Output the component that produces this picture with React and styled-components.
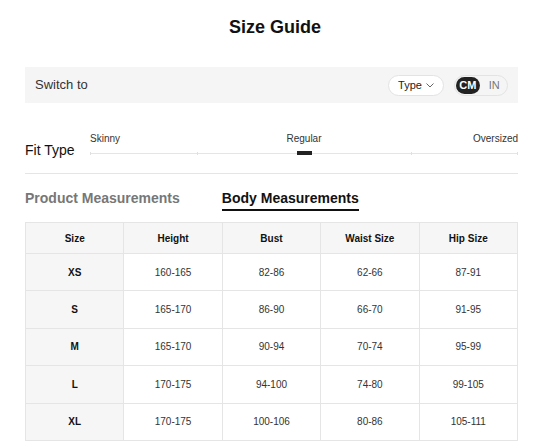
import React from 'react';
import styled, { createGlobalStyle } from 'styled-components';

const GlobalStyle = createGlobalStyle`
  body {
    margin: 0;
    background: #fff;
    font-family: "Liberation Sans", Arial, sans-serif;
    color: #222;
  }
`;

const Page = styled.div`
  width: 493px;
  padding: 17px 0 0 25px;
`;

const Title = styled.h1`
  margin: 0;
  font-size: 18px;
  line-height: 20px;
  font-weight: bold;
  text-align: center;
  color: #111;
  padding-left: 7px;
`;

const SwitchBar = styled.div`
  margin-top: 30px;
  height: 36px;
  background: #f5f5f5;
  display: flex;
  align-items: center;
  justify-content: space-between;
  padding: 0 10px;
`;

const SwitchLabel = styled.span`
  font-size: 13px;
  color: #333;
  margin-top: -2px;
`;

const Controls = styled.div`
  display: flex;
  align-items: center;
  gap: 10px;
`;

const TypeButton = styled.div`
  box-sizing: border-box;
  width: 56px;
  height: 21px;
  border: 1px solid #e3e3e3;
  border-radius: 11px;
  background: #fff;
  display: flex;
  align-items: center;
  justify-content: center;
  gap: 4px;
  font-size: 11px;
  color: #222;
`;

const UnitToggle = styled.div`
  box-sizing: border-box;
  width: 54px;
  height: 21px;
  border: 1px solid #e3e3e3;
  border-radius: 11px;
  padding: 1px;
  display: flex;
  align-items: center;
`;

const Unit = styled.span`
  width: 25px;
  height: 17px;
  border-radius: 9px;
  display: flex;
  align-items: center;
  justify-content: center;
  font-size: 11px;
  font-weight: ${p => (p.$active ? 'bold' : 'normal')};
  background: ${p => (p.$active ? '#222' : 'transparent')};
  color: ${p => (p.$active ? '#fff' : '#777')};
  margin-left: ${p => (p.$active ? '0' : '3px')};
`;

const FitRow = styled.div`
  display: flex;
  align-items: flex-end;
  padding: 30px 0 16px;
  border-bottom: 1px solid #e5e5e5;
`;

const FitLabel = styled.div`
  width: 65px;
  flex-shrink: 0;
  font-size: 14px;
  line-height: 16px;
  color: #111;
  margin-bottom: -1px;
`;

const Slider = styled.div`
  flex: 1;
`;

const SliderLabels = styled.div`
  display: grid;
  grid-template-columns: 1fr auto 1fr;
  font-size: 10px;
  line-height: 12px;
  color: #333;

  & > span:last-child {
    text-align: right;
  }
`;

const Track = styled.div`
  position: relative;
  height: 12px;
`;

const Line = styled.div`
  position: absolute;
  left: 0;
  right: 0;
  top: 8px;
  height: 1px;
  background: #e5e5e5;
`;

const Tick = styled.div`
  position: absolute;
  top: 7px;
  width: 1px;
  height: 3px;
  background: #e0e0e0;
`;

const Thumb = styled.div`
  position: absolute;
  top: 6px;
  left: 50%;
  width: 15px;
  height: 4px;
  margin-left: -7px;
  background: #222;
`;

const Tabs = styled.div`
  display: flex;
  gap: 42px;
  margin-top: 16px;
`;

const Tab = styled.div`
  font-size: 14px;
  line-height: 16px;
  font-weight: bold;
  padding-bottom: 3px;
  color: ${p => (p.$active ? '#111' : '#777')};
  border-bottom: 2px solid ${p => (p.$active ? '#111' : 'transparent')};
`;

const Table = styled.table`
  margin-top: 11px;
  width: 493px;
  border-collapse: collapse;
  table-layout: fixed;
  font-size: 10px;
  text-align: center;
`;

const Th = styled.th`
  height: 30px;
  padding: 0;
  font-weight: bold;
  color: #111;
  background: #f6f6f6;
  border: 1px solid #e5e5e5;
`;

const Td = styled.td`
  height: 36.4px;
  padding: 0;
  border: 1px solid #e5e5e5;
  color: ${p => (p.$size ? '#111' : '#333')};
  font-weight: ${p => (p.$size ? 'bold' : 'normal')};
  background: ${p => (p.$size ? '#f6f6f6' : '#fff')};
`;

const headers = ['Size', 'Height', 'Bust', 'Waist Size', 'Hip Size'];

const rows = [
  ['XS', '160-165', '82-86', '62-66', '87-91'],
  ['S', '165-170', '86-90', '66-70', '91-95'],
  ['M', '165-170', '90-94', '70-74', '95-99'],
  ['L', '170-175', '94-100', '74-80', '99-105'],
  ['XL', '170-175', '100-106', '80-86', '105-111'],
];

function Chevron() {
  return (
    <svg width="8" height="5" viewBox="0 0 8 5" fill="none">
      <path d="M0.5 0.5l3.5 3.5 3.5-3.5" stroke="#555" strokeWidth="0.9" />
    </svg>
  );
}

export default function App() {
  return (
    <Page>
      <GlobalStyle />
      <Title>Size Guide</Title>
      <SwitchBar>
        <SwitchLabel>Switch to</SwitchLabel>
        <Controls>
          <TypeButton>
            Type <Chevron />
          </TypeButton>
          <UnitToggle>
            <Unit $active>CM</Unit>
            <Unit>IN</Unit>
          </UnitToggle>
        </Controls>
      </SwitchBar>
      <FitRow>
        <FitLabel>Fit Type</FitLabel>
        <Slider>
          <SliderLabels>
            <span>Skinny</span>
            <span>Regular</span>
            <span>Oversized</span>
          </SliderLabels>
          <Track>
            <Line />
            {[0, 25, 75, 100].map(p => (
              <Tick key={p} style={{ left: `calc(${p}% - ${p === 100 ? 1 : 0}px)` }} />
            ))}
            <Thumb />
          </Track>
        </Slider>
      </FitRow>
      <Tabs>
        <Tab>Product Measurements</Tab>
        <Tab $active>Body Measurements</Tab>
      </Tabs>
      <Table>
        <thead>
          <tr>
            {headers.map(h => (
              <Th key={h}>{h}</Th>
            ))}
          </tr>
        </thead>
        <tbody>
          {rows.map(r => (
            <tr key={r[0]}>
              {r.map((v, i) => (
                <Td key={i} $size={i === 0}>
                  {v}
                </Td>
              ))}
            </tr>
          ))}
        </tbody>
      </Table>
    </Page>
  );
}
